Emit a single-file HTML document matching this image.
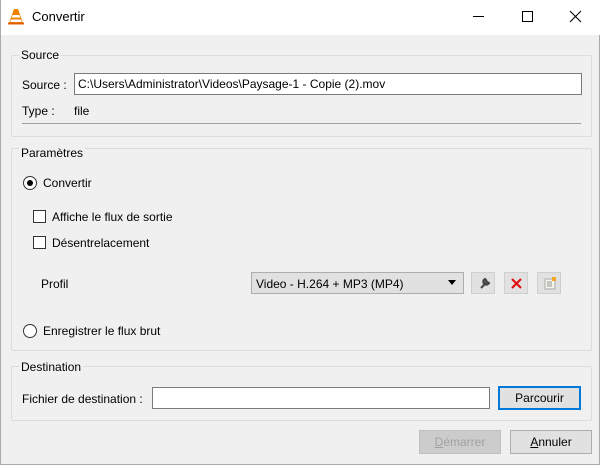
<!DOCTYPE html>
<html><head><style>
*{box-sizing:border-box}
body{margin:0;width:600px;height:465px;overflow:hidden;background:#f0f0f0;font-family:"Liberation Sans",sans-serif;font-size:12px;color:#000;position:relative;border-left:1px solid #aaa;border-right:1px solid #aaa;border-bottom:1px solid #aaa}
.a{position:absolute}
.title{left:0;top:0;width:600px;height:35px;background:#fff}
.frame{border:1px solid #dcdcdc;border-radius:2px}
.leg{background:#f0f0f0;padding:0 2px}
.inp{background:#fff;border:1px solid #7a7a7a}
.btn{background:#e1e1e1;border:1px solid #adadad;text-align:center;line-height:21px}
.cb{width:13px;height:13px;border:1px solid #333;background:#fff}
.rd{width:14px;height:14px;border:1px solid #333;border-radius:50%;background:#fff}
.ib{width:24px;height:22px;background:#e1e1e1;border:1px solid #cfcfcf}
</style></head><body>
<div class="a title"></div>
<svg class="a" style="left:7px;top:8px" width="16" height="17" viewBox="0 0 16 17"><path d="M6 1h4l5 14H1z" fill="#f08000"/><path d="M4.5 7h7l.8 2.5H3.7zM3 11.5h10l.8 2.5H2.2z" fill="#fff"/><rect x="0" y="14.5" width="16" height="2" fill="#e06000"/></svg>
<div class="a" style="left:31px;top:9px;font-size:13px">Convertir</div>
<div class="a" style="left:472px;top:16px;width:11px;height:1px;background:#000"></div>
<div class="a" style="left:521px;top:11px;width:11px;height:11px;border:1px solid #000"></div>
<svg class="a" style="left:568px;top:10px" width="13" height="13"><path d="M1 1L12 12M12 1L1 12" stroke="#000" stroke-width="1.1"/></svg>

<div class="a frame" style="left:10px;top:55px;width:581px;height:82px"></div>
<div class="a leg" style="left:18px;top:48px">Source</div>
<div class="a" style="left:21px;top:78px">Source :</div>
<div class="a inp" style="left:73px;top:73px;width:508px;height:22px;padding:3px 3px">C:\Users\Administrator\Videos\Paysage-1 - Copie (2).mov</div>
<div class="a" style="left:21px;top:104px">Type :</div>
<div class="a" style="left:73px;top:104px">file</div>
<div class="a" style="left:21px;top:123px;width:559px;height:1px;background:#a0a0a0"></div>

<div class="a frame" style="left:10px;top:148px;width:581px;height:203px"></div>
<div class="a leg" style="left:18px;top:146px">Paramètres</div>
<div class="a rd" style="left:22px;top:176px"><div class="a" style="left:3px;top:3px;width:6px;height:6px;border-radius:50%;background:#000"></div></div>
<div class="a" style="left:42px;top:176px">Convertir</div>
<div class="a cb" style="left:32px;top:210px"></div>
<div class="a" style="left:51px;top:210px">Affiche le flux de sortie</div>
<div class="a cb" style="left:32px;top:236px"></div>
<div class="a" style="left:51px;top:236px">Désentrelacement</div>
<div class="a" style="left:40px;top:277px">Profil</div>
<div class="a" style="left:250px;top:272px;width:213px;height:22px;background:#e1e1e1;border:1px solid #adadad;padding:4px 4px">Video - H.264 + MP3 (MP4)</div>
<svg class="a" style="left:447px;top:280px" width="9" height="5"><path d="M0 0h8L4 5z" fill="#000"/></svg>
<div class="a ib" style="left:470px;top:272px"><svg width="24" height="22"><path d="M9 15l5-5M13 6a3 3 0 1 0 4 4l-2-1-1-2z" stroke="#444" stroke-width="2" fill="#666"/></svg></div>
<div class="a ib" style="left:503px;top:272px"><svg width="24" height="22"><path d="M7 6l9 9M16 6l-9 9" stroke="#e01010" stroke-width="2.2"/></svg></div>
<div class="a ib" style="left:536px;top:272px"><svg width="24" height="22"><rect x="7" y="6" width="10" height="10" fill="#f4f4e8" stroke="#aaa"/><path d="M9 9h5M9 11h5M9 13h5" stroke="#999"/><rect x="14" y="4" width="4" height="4" fill="#f5a623"/></svg></div>
<div class="a rd" style="left:22px;top:324px"></div>
<div class="a" style="left:42px;top:324px">Enregistrer le flux brut</div>

<div class="a frame" style="left:10px;top:366px;width:581px;height:55px"></div>
<div class="a leg" style="left:18px;top:360px">Destination</div>
<div class="a" style="left:21px;top:392px">Fichier de destination :</div>
<div class="a inp" style="left:151px;top:387px;width:338px;height:22px"></div>
<div class="a btn" style="left:497px;top:386px;width:83px;height:24px;border:2px solid #0078d7;line-height:20px">Parcourir</div>
<div class="a btn" style="left:418px;top:430px;width:82px;height:24px;color:#a0a0a0;background:#ccc;border-color:#bfbfbf;line-height:22px"><u>D</u>émarrer</div>
<div class="a btn" style="left:509px;top:430px;width:82px;height:24px;line-height:22px"><u>A</u>nnuler</div>
</body></html>
